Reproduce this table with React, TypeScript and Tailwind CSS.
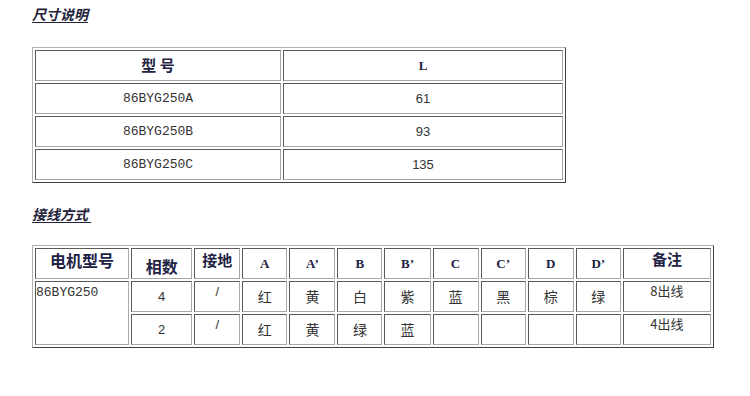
import React from "react";

const cell =
  "border border-t-[#5a5a5a] border-l-[#5a5a5a] border-r-[#a8a8a8] border-b-[#a8a8a8] p-0 text-center";
const tableBox =
  "border-separate border-spacing-[2px] table-fixed border border-t-[#b0b0b0] border-l-[#b0b0b0] border-r-[#404040] border-b-[#404040]";

const sizes = [
  { model: "86BYG250A", l: "61" },
  { model: "86BYG250B", l: "93" },
  { model: "86BYG250C", l: "135" },
];

const letters = ["A", "A’", "B", "B’", "C", "C’", "D", "D’"];
const letterWidths = ["w-[45px]", "w-[46px]", "w-[45px]", "w-[46px]", "w-[46px]", "w-[45px]", "w-[46px]", "w-[45px]"];
const wires = [
  { phases: "4", colors: ["红", "黄", "白", "紫", "蓝", "黑", "棕", "绿"], note: "8出线" },
  { phases: "2", colors: ["红", "黄", "绿", "蓝", "", "", "", ""], note: "4出线" },
];

const cjk = "font-['Noto_Sans_CJK_SC',sans-serif]";
const mono = "font-['Liberation_Mono','Noto_Sans_CJK_SC',monospace]";
const sans = "font-['Liberation_Sans','Noto_Sans_CJK_SC',sans-serif]";

function SectionTitle({ children }: { children: React.ReactNode }) {
  return (
    <div className="h-[20px] leading-[20px]">
      <span
        className={`${cjk} text-[14px] font-bold italic underline underline-offset-2 text-[#222238]`}
      >
        {children}
      </span>
    </div>
  );
}

export default function App() {
  return (
    <div className="w-[750px] h-[396px] bg-white pl-[32px] overflow-hidden">
      <div className="pt-[4px]">
        <SectionTitle>尺寸说明</SectionTitle>
      </div>

      <table className={`${tableBox} mt-[23px] w-[534px]`}>
        <tbody>
          <tr>
            <td className={`${cell} w-[246px] h-[31px] ${cjk} text-[15px] font-bold text-[#222244]`}>
              型&nbsp;号
            </td>
            <td className={`${cell} w-[280px] h-[31px] font-['Liberation_Serif',serif] text-[13px] font-bold text-[#222244]`}>
              L
            </td>
          </tr>
          {sizes.map((row) => (
            <tr key={row.model}>
              <td className={`${cell} h-[31px] ${mono} text-[13px] text-[#333]`}>{row.model}</td>
              <td className={`${cell} h-[31px] ${sans} text-[13px] text-[#333]`}>{row.l}</td>
            </tr>
          ))}
        </tbody>
      </table>

      <div className="mt-[21px]">
        <SectionTitle>接线方式&nbsp;</SectionTitle>
      </div>

      <table className={`${tableBox} mt-[21px] w-[682px]`}>
        <tbody>
          <tr className="h-[31px]">
            <td className={`${cell} w-[94px] align-top ${cjk} text-[16px] font-bold leading-[22px] text-[#222244]`}>
              电机型号
            </td>
            <td className={`${cell} w-[61px] align-bottom ${cjk} text-[16px] font-bold leading-[24px] text-[#222244]`}>
              相数
            </td>
            <td className={`${cell} w-[46px] align-top ${cjk} text-[15px] font-bold leading-[22px] text-[#222244]`}>
              接地
            </td>
            {letters.map((l, i) => (
              <td
                key={l}
                className={`${cell} ${letterWidths[i]} font-['Liberation_Serif',serif] text-[13px] font-bold text-[#222244]`}
              >
                {l}
              </td>
            ))}
            <td className={`${cell} w-[88px] align-top ${cjk} text-[15px] font-bold leading-[20px] text-[#222244]`}>
              备注
            </td>
          </tr>
          {wires.map((w, r) => (
            <tr key={w.note} className="h-[31px]">
              {r === 0 && (
                <td rowSpan={2} className={`${cell} text-left align-top ${mono} text-[13px] leading-[22px] text-[#333]`}>
                  86BYG250
                </td>
              )}
              <td className={`${cell} ${sans} text-[13px] text-[#333]`}>{w.phases}</td>
              <td className={`${cell} align-top ${sans} text-[13px] leading-[20px] text-[#333]`}>/</td>
              {w.colors.map((c, i) => (
                <td key={i} className={`${cell} ${cjk} text-[14px] text-[#333]`}>
                  {c}
                </td>
              ))}
              <td className={`${cell} align-top ${cjk} text-[13px] leading-[18px] text-[#333]`}>{w.note}</td>
            </tr>
          ))}
        </tbody>
      </table>
    </div>
  );
}
